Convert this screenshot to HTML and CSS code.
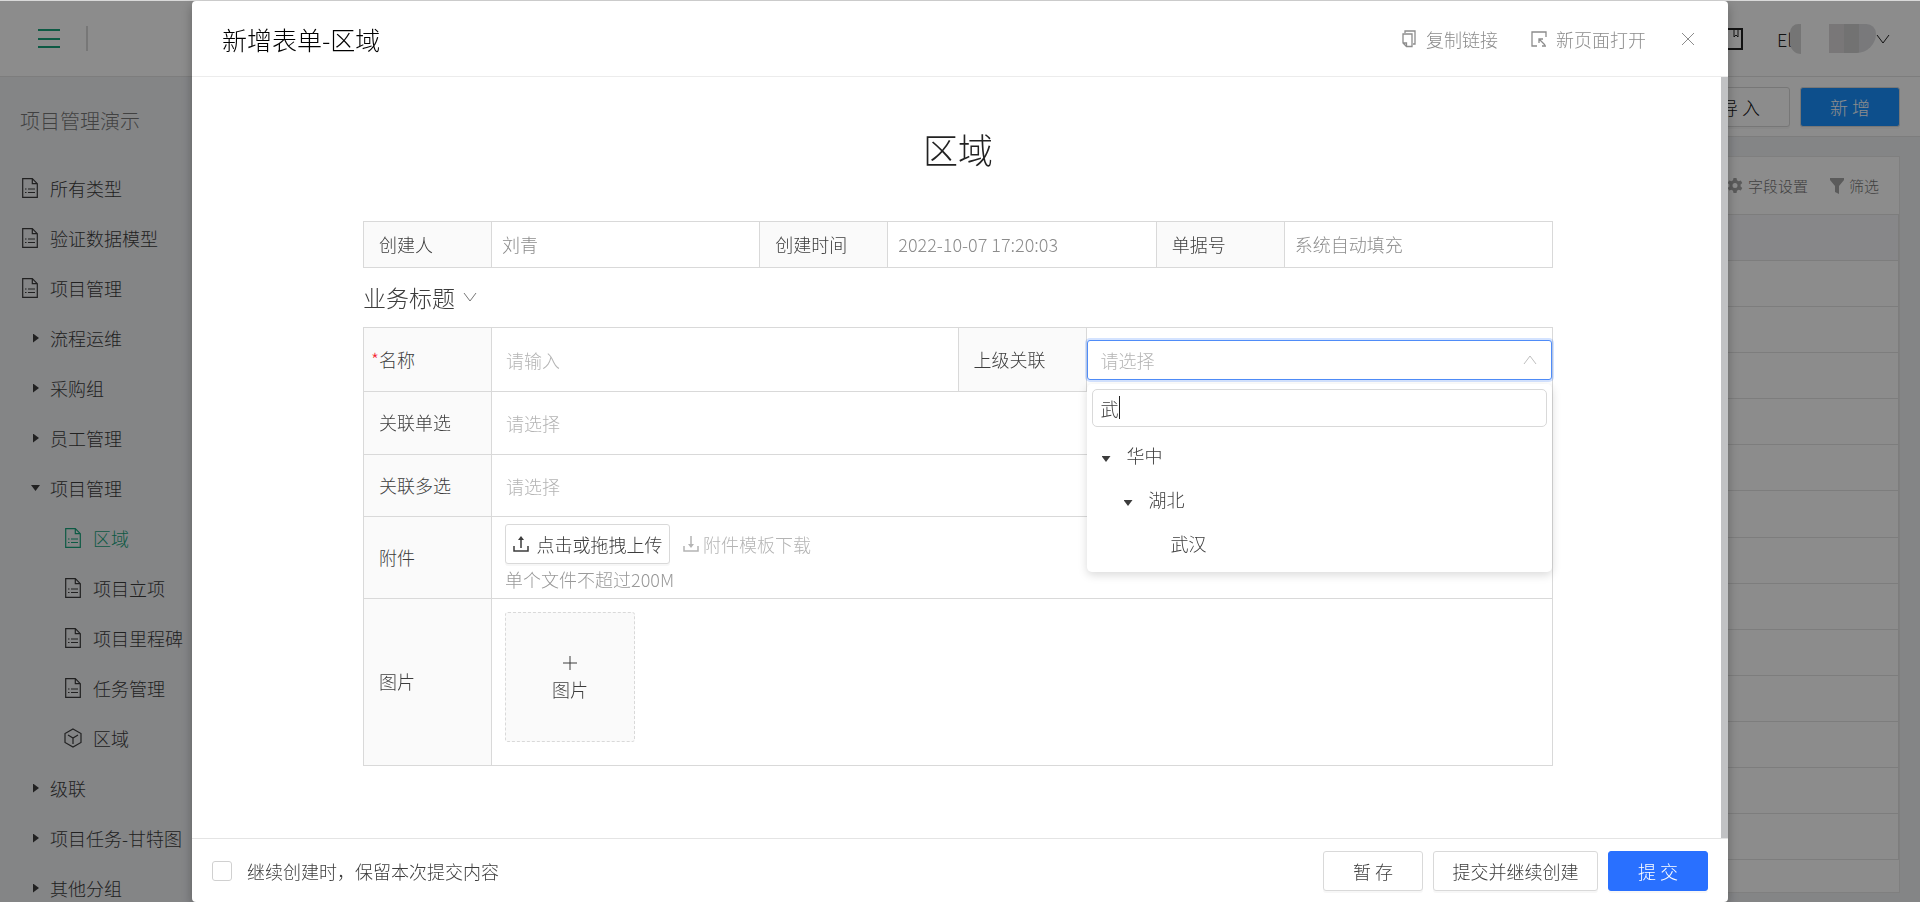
FILE: index.html
```
<!DOCTYPE html>
<html lang="zh-CN">

<head>
    <meta charset="UTF-8">
    <meta name="viewport" content="width=device-width, initial-scale=1.0">
    <title>新增表单-区域</title>
    <link rel="stylesheet" href="styles.css">
</head>

<body>
    <!-- shared icons -->
    <svg class="sprite" aria-hidden="true">
        <symbol id="icon-doc" viewBox="0 0 16 20">
            <path d="M.7.7h9.6l5 5v13.6H.7zM10.3.7v5h5" />
            <path d="M3 11h1.500M6 11h7M3 14.500h1.500M6 14.500h7" />
        </symbol>
        <symbol id="icon-cube" viewBox="0 0 18 20">
            <path d="M9 1l8 4.500v9L9 19l-8-4.500v-9zM4 7l5 3 5-3M9 10v6" />
        </symbol>
        <symbol id="icon-down" viewBox="0 0 14 10">
            <path d="M1 1l6 8 6-8" />
        </symbol>
    </svg>

    <div class="app">
        <header class="topbar">
            <button class="menu-toggle" aria-label="菜单"><span></span><span></span><span></span></button>
            <span class="topbar-divider"></span>
            <div class="topbar-right">
                <svg class="icon-book" viewBox="0 0 22 22"><path d="M1 1h20v20H1z" /><path class="mark" d="M13 1v8l2-2 2 2V1" /></svg>
                <span class="lang">El<span class="smudge"></span></span>
                <span class="user"><i></i><i></i><i></i></span>
                <svg class="icon-chevron"><use href="#icon-down" /></svg>
            </div>
        </header>

        <div class="content">
            <nav class="sidebar">
                <h2>项目管理演示</h2>
                <ul>
                    <li><a href="#"><svg class="icon-doc"><use href="#icon-doc" /></svg>所有类型</a></li>
                    <li><a href="#"><svg class="icon-doc"><use href="#icon-doc" /></svg>验证数据模型</a></li>
                    <li><a href="#"><svg class="icon-doc"><use href="#icon-doc" /></svg>项目管理</a></li>
                    <li><a href="#"><span class="arrow"></span>流程运维</a></li>
                    <li><a href="#"><span class="arrow"></span>采购组</a></li>
                    <li><a href="#"><span class="arrow"></span>员工管理</a></li>
                    <li><a href="#"><span class="arrow open"></span>项目管理</a></li>
                    <li class="sub"><a href="#" class="active"><svg class="icon-doc"><use href="#icon-doc" /></svg>区域</a></li>
                    <li class="sub"><a href="#"><svg class="icon-doc"><use href="#icon-doc" /></svg>项目立项</a></li>
                    <li class="sub"><a href="#"><svg class="icon-doc"><use href="#icon-doc" /></svg>项目里程碑</a></li>
                    <li class="sub"><a href="#"><svg class="icon-doc"><use href="#icon-doc" /></svg>任务管理</a></li>
                    <li class="sub"><a href="#"><svg class="icon-doc icon-cube"><use href="#icon-cube" /></svg>区域</a></li>
                    <li><a href="#"><span class="arrow"></span>级联</a></li>
                    <li><a href="#"><span class="arrow"></span>项目任务-甘特图</a></li>
                    <li><a href="#"><span class="arrow"></span>其他分组</a></li>
                </ul>
            </nav>

            <main class="main">
                <div class="toolbar">
                    <button class="btn btn-dark">导 入</button>
                    <button class="btn btn-add">新 增</button>
                </div>
                <div class="card">
                    <div class="card-tools">
                        <a href="#">
                            <svg class="icon-gear" viewBox="0 0 16 16"><path fill-rule="evenodd" d="M6.500 0h3l.5 2.300 1.600.9 2.200-.8 1.500 2.600-1.700 1.600v1.800l1.700 1.600-1.500 2.600-2.200-.8-1.600.9-.5 2.300h-3L6 12.700l-1.600-.9-2.200.8L.7 10l1.700-1.600V6.600L.7 5l1.500-2.600 2.200.8L6 2.300zM8 5a2.500 2.500 0 100 5 2.500 2.500 0 000-5z" /></svg>
                            字段设置
                        </a>
                        <a href="#">
                            <svg class="icon-filter" viewBox="0 0 14 16"><path d="M0 0h14v2L9 8v8l-4-2V8L0 2z" /></svg>
                            筛选
                        </a>
                    </div>
                    <div class="grid">
                        <div class="grid-head"></div>
                        <div></div><div></div><div></div><div></div><div></div><div></div>
                        <div></div><div></div><div></div><div></div><div></div><div></div><div></div>
                    </div>
                </div>
            </main>
        </div>
    </div>

    <div class="mask">
        <section class="modal" role="dialog" aria-labelledby="modalTitle">
            <header class="modal-header">
                <h1 id="modalTitle">新增表单-区域</h1>
                <a href="#" class="action">
                    <svg class="icon-action" viewBox="0 0 18 18"><path d="M5 3V1h10v13h-2M3 4h9v12.500H6.500L3 13zM3 13h3.500v3.500" /></svg>
                    复制链接
                </a>
                <a href="#" class="action">
                    <svg class="icon-action" viewBox="0 0 18 18"><path d="M16 7V2H2v14h5M12 16h4M9 9l6 6M9 13V9h4" /></svg>
                    新页面打开
                </a>
                <button class="close" aria-label="关闭"><svg viewBox="0 0 14 14"><path d="M1 1l12 12M13 1L1 13" /></svg></button>
            </header>

            <div class="modal-body">
                <form class="form">
                    <h2 class="form-title">区域</h2>

                    <div class="row row-info">
                        <div class="label">创建人</div>
                        <div class="value">刘青</div>
                        <div class="label">创建时间</div>
                        <div class="value">2022-10-07 17:20:03</div>
                        <div class="label">单据号</div>
                        <div class="value">系统自动填充</div>
                    </div>

                    <h3 class="section-title">业务标题 <svg class="icon-chevron"><use href="#icon-down" /></svg></h3>

                    <div class="rows">
                        <div class="row row-two">
                            <label class="label required" for="name">名称</label>
                            <div class="field"><input id="name" type="text" placeholder="请输入"></div>
                            <label class="label" for="parent">上级关联</label>
                            <div class="field field-select">
                                <select id="parent" class="focused">
                                    <option>请选择</option>
                                </select>
                                <svg class="icon-up" viewBox="0 0 14 10"><path d="M1 9l6-8 6 8" /></svg>
                                <div class="dropdown">
                                    <div class="search">
                                        <input type="text" value="武" aria-label="搜索">
                                        <span class="caret"></span>
                                    </div>
                                    <ul class="tree">
                                        <li><span class="arrow open"></span>华中
                                            <ul>
                                                <li><span class="arrow open"></span>湖北
                                                    <ul>
                                                        <li><span class="arrow none"></span>武汉</li>
                                                    </ul>
                                                </li>
                                            </ul>
                                        </li>
                                    </ul>
                                </div>
                            </div>
                        </div>
                        <div class="row">
                            <label class="label" for="single">关联单选</label>
                            <div class="field">
                                <select id="single">
                                    <option>请选择</option>
                                </select>
                            </div>
                        </div>
                        <div class="row row-multi">
                            <label class="label" for="multi">关联多选</label>
                            <div class="field">
                                <select id="multi">
                                    <option>请选择</option>
                                </select>
                            </div>
                        </div>
                        <div class="row row-file">
                            <div class="label">附件</div>
                            <div class="field">
                                <div class="upload">
                                    <button type="button" class="btn btn-upload">
                                        <svg class="icon-load" viewBox="0 0 16 16"><path d="M1 10v5h14v-5M8 12V2" /><path class="tip" d="M8 0l3 4H5z" /></svg>
                                        点击或拖拽上传
                                    </button>
                                    <a href="#">
                                        <svg class="icon-load" viewBox="0 0 16 16"><path d="M1 10v5h14v-5M8 0v10" /><path class="tip" d="M8 12l3-4H5z" /></svg>
                                        附件模板下载
                                    </a>
                                </div>
                                <p class="hint">单个文件不超过200M</p>
                            </div>
                        </div>
                        <div class="row row-image">
                            <div class="label">图片</div>
                            <div class="field">
                                <button type="button" class="tile">
                                    <svg viewBox="0 0 14 14"><path d="M7 0v14M0 7h14" /></svg>
                                    图片
                                </button>
                            </div>
                        </div>
                    </div>
                </form>
            </div>

            <footer class="modal-footer">
                <label class="keep"><input type="checkbox">继续创建时，保留本次提交内容</label>
                <button class="btn">暂 存</button>
                <button class="btn btn-wide">提交并继续创建</button>
                <button class="btn btn-primary">提 交</button>
            </footer>
        </section>
    </div>
</body>

</html>
```
FILE: styles.css
```
* {
    box-sizing: border-box;
    margin: 0;
    padding: 0;
}

body,
button,
input,
select {
    font-family: "Noto Sans CJK SC", sans-serif;
    font-size: 18px;
    font-weight: 300;
    line-height: 26px;
    color: #3c3c3c;
}

body {
    height: 100vh;
    overflow: hidden;
    border-top: 1px solid #d9d9d9;
}

a {
    color: inherit;
    text-decoration: none;
}

ul {
    list-style: none;
}

button {
    cursor: pointer;
}

svg {
    flex: none;
    fill: none;
    stroke: currentColor;
}

.sprite {
    display: none;
}

/* page behind the modal */
.app {
    height: 100%;
    display: flex;
    flex-direction: column;
    background-color: #f0f2f5;
}

.topbar {
    height: 76px;
    flex: none;
    display: flex;
    align-items: center;
    padding: 0 30px 0 38px;
    background-color: #fff;
    border-bottom: 1px solid #e4e4e4;
}

.menu-toggle {
    width: 22px;
    height: 19px;
    display: flex;
    flex-direction: column;
    justify-content: space-between;
    background: none;
    border: none;
}

.menu-toggle span {
    height: 2px;
    background-color: #18a47c;
}

.topbar-divider {
    width: 2px;
    height: 25px;
    margin-left: 26px;
    background-color: #d9d9d9;
}

.topbar-right {
    display: flex;
    align-items: center;
    margin-left: auto;
    color: #222;
}

.icon-book {
    width: 22px;
    height: 22px;
    stroke-width: 2;
}

.icon-book .mark {
    stroke-width: 1;
}

.lang {
    display: flex;
    align-items: center;
    width: 52px;
    margin-left: 34px;
}

.smudge {
    width: 11px;
    height: 30px;
    margin-left: -2px;
    border-radius: 12px 0 0 16px;
    background-color: #d6d6d6;
}

.user {
    display: flex;
    height: 29px;
    overflow: hidden;
    border-radius: 0 12px 24px 0;
}

.user i {
    width: 15px;
    background-color: #dcd9da;
}

.user i:nth-child(2) {
    background-color: #cfcfcf;
}

.user i:nth-child(3) {
    width: 17px;
    background-color: #dcdde0;
}

.icon-chevron {
    width: 14px;
    height: 10px;
}

.content {
    flex: 1;
    min-height: 0;
    display: flex;
}

.sidebar {
    width: 250px;
    padding: 20px 0 0 20px;
    overflow: hidden;
    white-space: nowrap;
}

.sidebar h2 {
    margin-bottom: 18px;
    font-size: 20px;
    font-weight: 300;
    line-height: 48px;
    color: #777;
}

.sidebar a {
    display: flex;
    align-items: center;
    height: 50px;
    padding-left: 2px;
}

.sidebar .sub a {
    padding-left: 45px;
}

.icon-doc {
    width: 16px;
    height: 20px;
    margin-right: 12px;
    stroke-width: 1.2;
}

.icon-cube {
    width: 18px;
    margin: 0 11px 0 -1px;
}

.sidebar .active {
    color: #18a47c;
}

.arrow {
    flex: none;
    width: 6px;
    height: 9px;
    margin: 0 11px;
    background-color: currentColor;
    clip-path: polygon(0 0, 100% 50%, 0 100%);
}

.arrow.open {
    width: 9px;
    height: 6px;
    margin: 0 10px 0 9px;
    clip-path: polygon(0 0, 100% 0, 50% 100%);
}

.arrow.none {
    visibility: hidden;
}

.main {
    flex: 1;
    min-width: 0;
    display: flex;
    flex-direction: column;
}

.toolbar {
    height: 60px;
    flex: none;
    display: flex;
    align-items: center;
    justify-content: flex-end;
    gap: 10px;
    padding: 0 20px;
    background-color: #fff;
    border-bottom: 1px solid #e4e4e4;
}

.btn {
    flex: none;
    width: 100px;
    height: 40px;
    background-color: #fff;
    border: 1px solid #d9d9d9;
    border-radius: 3px;
    box-shadow: 0 2px 0 rgba(0, 0, 0, 0.03);
}

.btn-dark {
    color: #111;
}

.btn-add {
    background-color: #1890ff;
    color: #fff;
}

.card {
    flex: 1;
    display: flex;
    flex-direction: column;
    margin: 19px 20px 9px;
    padding-bottom: 32px;
    background-color: #fff;
    border: 1px solid #e8e8e8;
}

.card-tools {
    height: 57px;
    flex: none;
    display: flex;
    align-items: center;
    justify-content: flex-end;
    gap: 22px;
    padding-right: 20px;
    font-size: 15px;
    color: #777;
}

.card-tools a {
    display: flex;
    align-items: center;
    gap: 5px;
}

.card-tools svg {
    width: 14px;
    height: 16px;
    fill: #a6a6a6;
    stroke: none;
}

.card-tools .icon-gear {
    width: 16px;
}

.grid {
    flex: 1;
    display: flex;
    flex-direction: column;
    border-top: 1px solid #e4e4e4;
    border-right: 1px solid #e4e4e4;
}

.grid div {
    flex: 1;
    border-bottom: 1px solid #e4e4e4;
}

.grid .grid-head {
    background-color: #f6f6f9;
}

/* modal */
.mask {
    position: fixed;
    inset: 1px 0 0;
    background-color: rgba(0, 0, 0, 0.45);
}

.modal {
    width: 80%;
    height: 100%;
    margin: 0 auto;
    display: flex;
    flex-direction: column;
    background-color: #fff;
    border-radius: 4px;
    box-shadow: 0 4px 12px rgba(0, 0, 0, 0.3);
}

.modal-header {
    height: 76px;
    flex: none;
    display: flex;
    align-items: center;
    padding: 0 30px;
    border-bottom: 1px solid #ececec;
}

.modal-header h1 {
    margin-right: auto;
    font-size: 25px;
    font-weight: 300;
    line-height: 40px;
    color: #000;
}

.action {
    display: flex;
    align-items: center;
    gap: 8px;
    margin-right: 32px;
    color: #8c8c8c;
}

.icon-action {
    width: 18px;
    height: 18px;
    stroke-width: 1.3;
}

.close {
    width: 20px;
    height: 20px;
    display: flex;
    align-items: center;
    justify-content: center;
    background: none;
    border: none;
    color: #8c8c8c;
}

.close svg {
    width: 14px;
    height: 14px;
}

.modal-body {
    flex: 1;
    min-height: 0;
    padding: 42px 168px 0 171px;
    border-right: 7px solid #c1c2c4;
}

.form-title {
    font-size: 35px;
    font-weight: 300;
    line-height: 60px;
    text-align: center;
    color: #222;
}

.row {
    display: grid;
    grid-template-columns: 128px 1fr;
    min-height: 63px;
    border: 1px solid #d9d9d9;
    border-width: 1px 0 0 1px;
}

.row > * {
    border-right: 1px solid #d9d9d9;
}

.row-info {
    grid-template-columns: repeat(3, 128px 1fr);
    min-height: 47px;
    margin-top: 42px;
    border-bottom-width: 1px;
}

.label {
    display: flex;
    align-items: center;
    padding: 0 0 2px 15px;
    background-color: #fafafa;
}

.required {
    padding-left: 7px;
}

.required::before {
    content: "*";
    width: 8px;
    color: #f5222d;
}

.value {
    display: flex;
    align-items: center;
    padding: 0 0 2px 10px;
    color: #8c8c8c;
}

.section-title {
    display: flex;
    align-items: center;
    gap: 8px;
    height: 59px;
    padding-bottom: 2px;
    font-size: 23px;
    font-weight: 300;
}

.section-title .icon-chevron {
    color: #777;
}

.rows {
    border-bottom: 1px solid #d9d9d9;
}

.row-two {
    grid-template-columns: 128px 1fr 128px 1fr;
    min-height: 64px;
}

.row-multi {
    min-height: 62px;
}

.field {
    min-width: 0;
    display: flex;
    flex-direction: column;
    justify-content: center;
}

.field input,
.field select {
    width: 100%;
    height: 40px;
    padding: 0 13px;
    appearance: none;
    background-color: #fff;
    border: 1px solid transparent;
    border-radius: 3px;
    outline: none;
}

.field select,
.field input::placeholder {
    color: #b4b4b4;
    opacity: 1;
}

.field select.focused {
    border-color: #4f8cf8;
    box-shadow: 0 0 0 2px rgba(41, 114, 255, 0.2);
}

.field-select {
    position: relative;
}

.icon-up {
    position: absolute;
    right: 15px;
    width: 14px;
    height: 10px;
    color: #bfbfbf;
}

.dropdown {
    position: absolute;
    top: 56px;
    left: 0;
    right: 0;
    z-index: 1;
    padding: 5px;
    background-color: #fff;
    border-radius: 5px;
    box-shadow: 0 3px 10px rgba(0, 0, 0, 0.15);
}

.search {
    position: relative;
    height: 38px;
}

.search input {
    height: 38px;
    padding: 0 8px;
    border-color: #d9d9d9;
    border-radius: 5px;
}

.caret {
    position: absolute;
    top: 7px;
    left: 27px;
    width: 1px;
    height: 23px;
    background-color: #222;
}

.tree {
    padding: 6px 0 2px;
    line-height: 44px;
}

.tree ul {
    padding-left: 22px;
}

.tree .arrow {
    display: inline-block;
    margin: 0 16px 1px 10px;
}

.tree .arrow.none {
    margin-right: 19px;
}

.row-file {
    min-height: 82px;
}

.row-file .field,
.row-image .field {
    padding-left: 13px;
}

.upload,
.upload a {
    display: flex;
    align-items: center;
}

.upload a {
    gap: 4px;
    margin-left: 13px;
    color: #b4b4b4;
}

.btn-upload {
    width: 165px;
    display: flex;
    align-items: center;
    justify-content: center;
    gap: 8px;
}

.icon-load {
    width: 16px;
    height: 16px;
    stroke-width: 1.5;
}

.icon-load .tip {
    fill: currentColor;
    stroke: none;
}

.hint {
    padding-top: 2px;
    color: #999;
}

.row-image {
    min-height: 167px;
}

.row-image .field {
    justify-content: flex-start;
    padding-top: 13px;
}

.tile {
    width: 130px;
    height: 130px;
    display: flex;
    flex-direction: column;
    align-items: center;
    justify-content: center;
    gap: 6px;
    padding-top: 4px;
    background-color: #fafafa;
    border: 1px dashed #d9d9d9;
    border-radius: 3px;
}

.tile svg {
    width: 14px;
    height: 14px;
}

.modal-footer {
    height: 64px;
    flex: none;
    display: flex;
    align-items: center;
    gap: 10px;
    padding: 0 20px;
    border-top: 1px solid #e4e4e4;
}

.keep {
    display: flex;
    align-items: center;
    gap: 15px;
    margin-right: auto;
}

.keep input {
    width: 20px;
    height: 20px;
    appearance: none;
    border: 1px solid #d0d0d0;
    border-radius: 3px;
}

.btn-wide {
    width: 165px;
}

.btn-primary {
    background-color: #2970ff;
    border-color: #2970ff;
    color: #fff;
}
```
